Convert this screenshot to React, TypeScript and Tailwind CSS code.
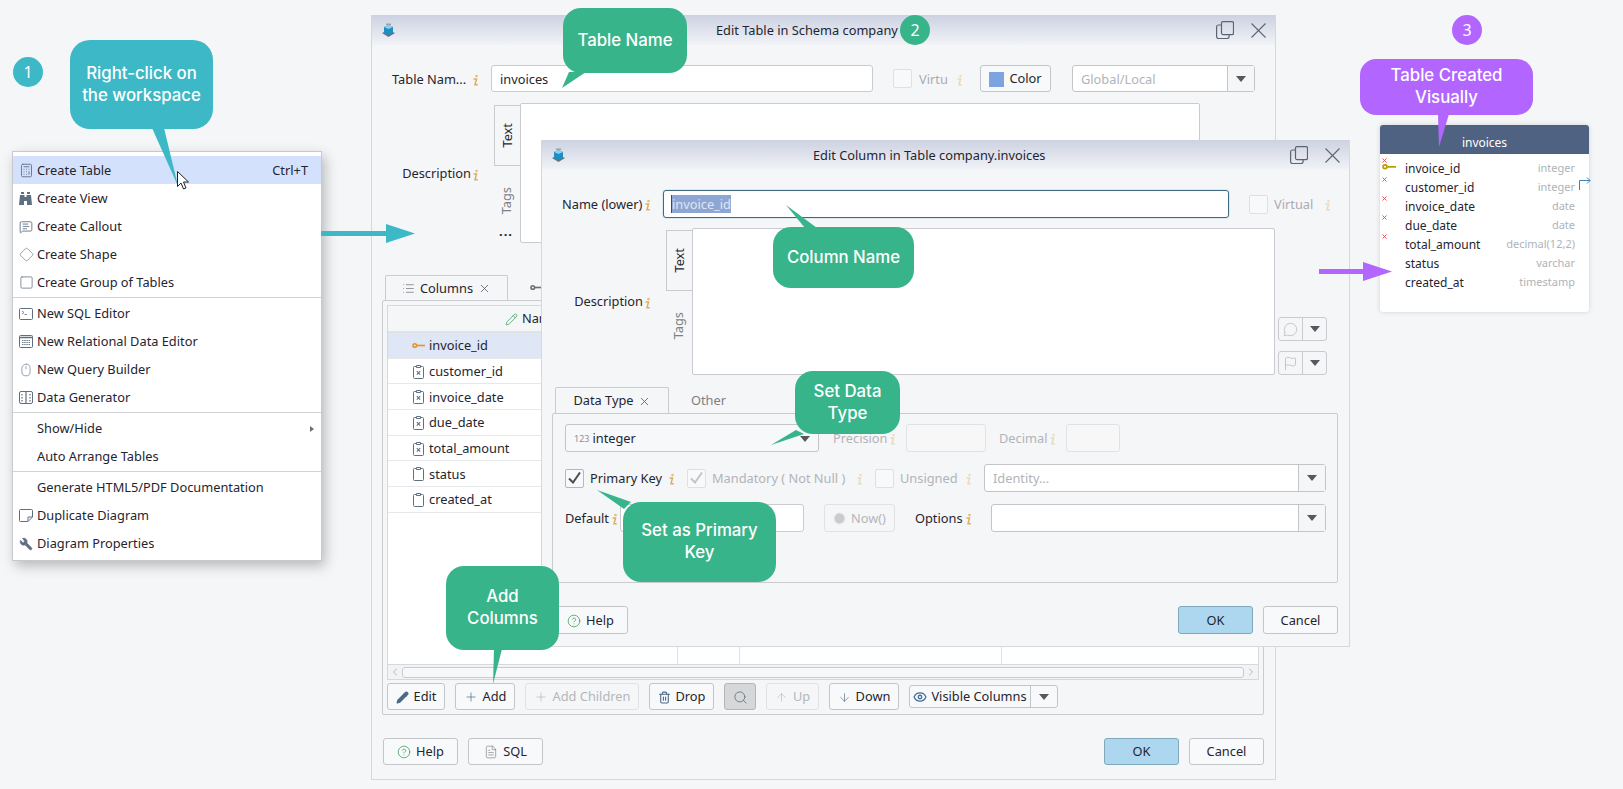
import type { ReactNode } from 'react';
import {
  ArrowDown, ArrowUp, Calculator, ChevronLeft, ChevronRight, CircleHelp, Clock, Diamond, Eye, FileText, Flag, List, MessageCircle,
  MessageSquareText, Mouse, Pencil, Plus, Search, Square, Trash2, Wrench, X,
} from 'lucide-react';

const ICON = '#5f6f82';

function Binoculars() {
  return (
    <svg width="13" height="13" viewBox="0 0 13 13" fill={ICON}>
      <path d="M2 0h3v2H2zM8 0h3v2H8zM1 3h4.500v2h2V3H12l1 10H8V9H5v4H0z" />
    </svg>
  );
}

function SqlIcon() {
  return (
    <svg width="14" height="12" viewBox="0 0 14 12" fill="none" stroke={ICON}>
      <rect x="0.500" y="0.500" width="13" height="11" rx="1" />
      <path d="M3 3l2 1.500-2 1.500M5.500 6.500h2.500" strokeWidth="0.800" />
    </svg>
  );
}

function GridIcon() {
  return (
    <svg width="14" height="13" viewBox="0 0 14 13" fill="none" stroke={ICON}>
      <rect x="0.500" y="0.500" width="13" height="12" rx="1" />
      <path d="M0.500 2.500h13" strokeWidth="1.500" />
      <path d="M3 5.500h8M3 7.500h8M3 9.500h8" strokeDasharray="1.500 0.700" strokeWidth="0.900" />
    </svg>
  );
}

function GeneratorIcon() {
  return (
    <svg width="14" height="13" viewBox="0 0 14 13" fill="none" stroke={ICON}>
      <rect x="0.500" y="0.500" width="13" height="12" rx="1.500" />
      <path d="M3 3v1.500M3 6v1.500M3 9v1.500M11 3v1.500M11 6v1.500M11 9v1.500M7 1v11" strokeWidth="1.200" />
    </svg>
  );
}

function NoteIcon() {
  return (
    <svg width="14" height="13" viewBox="0 0 14 13" fill="none" stroke={ICON}>
      <path d="M1.500 0.500h11a1 1 0 0 1 1 1v6.500l-4.500 4.500h-7.500a1 1 0 0 1-1-1v-10a1 1 0 0 1 1-1z" />
      <path d="M13 8h-4v4" />
    </svg>
  );
}

function KeyIcon({ color, size = 13 }: { color: string; size?: number }) {
  return (
    <svg width={size} height={(size * 7) / 13} viewBox="0 0 13 7" fill="none" stroke={color} strokeWidth="1.600">
      <circle cx="2.800" cy="3.500" r="1.800" />
      <path d="M5 3.500h8" />
    </svg>
  );
}

function ClipIcon({ crossed }: { crossed?: boolean }) {
  return (
    <svg width="11" height="14" viewBox="0 0 11 14" fill="none" stroke="#5f6f82" strokeWidth="1">
      <rect x="0.500" y="1.500" width="10" height="12" rx="1" />
      <path d="M3.500 0.500h4v2h-4z" fill="#fff" />
      {crossed && <path d="M3.800 6.200l3.400 3.400M7.200 6.200L3.800 9.600" strokeWidth="1.100" />}
    </svg>
  );
}

function Info({ muted }: { muted?: boolean }) {
  return (
    <svg width="8" height="14" viewBox="0 0 8 14" className={`shrink-0 ${muted ? 'opacity-40' : ''}`}>
      <circle cx="5.500" cy="4" r="1.300" fill="#e5bd74" />
      <path d="M2.500 7h3L4 12.700h2.800" fill="none" stroke="#dfae5a" strokeWidth="1.500" />
    </svg>
  );
}

function Caret() {
  return (
    <svg width="10" height="6" viewBox="0 0 10 6" fill="#55585c">
      <path d="M0 0h10L5 6z" />
    </svg>
  );
}

function Cube() {
  return (
    <svg width="15" height="15" viewBox="0 0 15 15" className="shrink-0">
      <path d="M1 10l6.500 4 6.500-4-6.500-3z" fill="#6b7078" />
      <path d="M3 4l4.500-2 4.500 2v6l-4.500 2-4.500-2z" fill="#1d8fc4" />
      <path d="M3 4l4.500 2 4.500-2-4.500-2z" fill="#8fd0ea" />
      <path d="M5 0.500h5v1.500h-5z" fill="#9aa0a8" />
    </svg>
  );
}

function TitleBar({ title, titleClass }: { title: string; titleClass: string }) {
  return (
    <div className="relative flex h-[30px] items-center bg-gradient-to-b from-[#cdd2e2] to-[#f1f3f7] pl-[9px]">
      <Cube />
      <span className={`absolute whitespace-nowrap text-[12.8px] text-[#1f2530] ${titleClass}`}>{title}</span>
      <div className="ml-auto flex items-center gap-[17px] pr-[9px]">
        <svg width="18" height="18" viewBox="0 0 18 18" fill="none" stroke="#5c6470" strokeWidth="1.200">
          <rect x="5.500" y="0.600" width="12" height="13" rx="1.500" />
          <path d="M5 4H2.600a2 2 0 0 0-2 2v9.500a2 2 0 0 0 2 2h8.500a2 2 0 0 0 2-2V14" />
        </svg>
        <svg width="15" height="15" viewBox="0 0 15 15" stroke="#5c6470" strokeWidth="1.100">
          <path d="M0.500 0.500l14 14M14.500 0.500l-14 14" />
        </svg>
      </div>
    </div>
  );
}

function Btn({ children, w, off, active, className = '' }: { children: ReactNode; w: string; off?: boolean; active?: boolean; className?: string }) {
  return (
    <div
      className={`flex h-[27px] shrink-0 items-center justify-center gap-[5px] rounded-[3px] border pt-[1px] text-[12.8px] ${w} ${
        off ? 'border-[#e1e2e4] text-[#b4b7bb]' : active ? 'border-[#b4b6b9] bg-[#d5d7d9] text-[#5c6470]' : 'border-[#c3c5c8] bg-[#f8f9fa] text-[#1f2530]'
      } ${className}`}
    >
      {children}
    </div>
  );
}

function Combo({ w, h = 'h-[27px]', text, box = 'w-[27px]' }: { w: string; h?: string; text?: string; box?: string }) {
  return (
    <div className={`flex shrink-0 items-stretch rounded-[3px] border border-[#c3c5c8] bg-white ${w} ${h}`}>
      <div className="flex-1 pl-[8px] text-[12.8px] leading-[26px] text-[#b1b4b8]">{text}</div>
      <div className={`flex items-center justify-center border-l border-[#c3c5c8] bg-[#f5f6f8] ${box}`}>
        <Caret />
      </div>
    </div>
  );
}

function Check({ on, off }: { on?: boolean; off?: boolean }) {
  return (
    <div className={`flex h-[19px] w-[19px] shrink-0 items-center justify-center rounded-[2px] border ${off ? 'border-[#dfe0e2]' : 'border-[#b5b7ba]'} bg-[#f8f9fa]`}>
      {on && (
        <svg width="13" height="12" viewBox="0 0 13 12" fill="none" stroke={off ? '#c3c5c8' : '#4a4d52'} strokeWidth="2">
          <path d="M1 6.500l4 4 7-10" />
        </svg>
      )}
    </div>
  );
}

function SideTabs() {
  return (
    <div className="flex w-[26px] shrink-0 flex-col items-center pt-[2px]">
      <div className="flex h-[61px] w-[26px] items-center justify-center border border-r-0 border-[#c9cbce] text-[12.8px] text-[#1f2530]">
        <span className="rotate-180 [writing-mode:vertical-rl]">Text</span>
      </div>
      <span className="mt-[21px] rotate-180 text-[12.8px] text-[#7d8085] [writing-mode:vertical-rl]">Tags</span>
    </div>
  );
}

type MenuEntry = { label: string; icon?: ReactNode; hint?: string; sep?: boolean; hot?: boolean; sub?: boolean };

const menu: MenuEntry[] = [
  { label: 'Create Table', icon: <Calculator size={15} color={ICON} strokeWidth={1.4} />, hint: 'Ctrl+T', hot: true },
  { label: 'Create View', icon: <Binoculars /> },
  { label: 'Create Callout', icon: <MessageSquareText size={14} color={ICON} strokeWidth={1.5} /> },
  { label: 'Create Shape', icon: <Diamond size={15} color={ICON} strokeWidth={1} /> },
  { label: 'Create Group of Tables', icon: <Square size={15} color={ICON} strokeWidth={1.2} />, sep: true },
  { label: 'New SQL Editor', icon: <SqlIcon /> },
  { label: 'New Relational Data Editor', icon: <GridIcon /> },
  { label: 'New Query Builder', icon: <Mouse size={14} color={ICON} strokeWidth={1.1} /> },
  { label: 'Data Generator', icon: <GeneratorIcon />, sep: true },
  { label: 'Show/Hide', sub: true },
  { label: 'Auto Arrange Tables', sep: true },
  { label: 'Generate HTML5/PDF Documentation' },
  { label: 'Duplicate Diagram', icon: <NoteIcon /> },
  { label: 'Diagram Properties', icon: <Wrench size={14} color={ICON} fill={ICON} strokeWidth={1.2} className="-scale-x-100" /> },
];

const columns = [
  { name: 'invoice_id', type: 'integer', key: true, nn: true },
  { name: 'customer_id', type: 'integer', nn: true },
  { name: 'invoice_date', type: 'date', nn: true },
  { name: 'due_date', type: 'date', nn: true },
  { name: 'total_amount', type: 'decimal(12,2)', nn: true },
  { name: 'status', type: 'varchar' },
  { name: 'created_at', type: 'timestamp' },
];

function Callout({ box, tail, points, children }: { box: string; tail: string; points: string; children: ReactNode }) {
  return (
    <>
      <svg className={`absolute z-30 ${tail}`} fill="currentColor">
        <polygon points={points} />
      </svg>
      <div className={`absolute z-30 flex items-center justify-center pb-[2px] text-center font-['Inter',sans-serif] text-[16.8px] font-medium leading-[22px] text-white ${box}`}>
        <div>{children}</div>
      </div>
    </>
  );
}

function Badge({ n, className }: { n: number; className: string }) {
  return (
    <div className={`absolute z-30 flex h-[30px] w-[30px] items-center justify-center rounded-full text-[16px] text-white ${className}`}>{n}</div>
  );
}

function Arrow({ className, color, shaft }: { className: string; color: string; shaft: number }) {
  return (
    <svg className={`absolute z-20 ${className}`} fill={color}>
      <path d={`M0 7h${shaft}v-7l29 9.500-29 9.500v-7h-${shaft}z`} />
    </svg>
  );
}

export default function App() {
  return (
    <div className="relative h-[789px] w-[1623px] overflow-hidden whitespace-nowrap bg-[#f5f6f8] font-['Noto_Sans',sans-serif] text-[#1f2530]">
      <Badge n={1} className="left-[13px] top-[57px] bg-[#3db8c6]" />
      <Badge n={2} className="left-[900px] top-[15px] bg-[#38b48a]" />
      <Badge n={3} className="left-[1452px] top-[15px] bg-[#b266ff]" />

      {/* Context menu */}
      <div className="absolute left-[12px] top-[151px] z-10 w-[310px] border border-[#c8c9cb] bg-white pb-[3px] pt-[4px] shadow-[3px_5px_12px_rgba(0,0,0,0.25)]">
        {menu.map(m => (
          <div key={m.label}>
            <div className={`flex h-[28px] items-center pl-[6px] pr-[13px] pt-[1px] text-[12.8px] ${m.hot ? 'bg-[#d3e1fc]' : ''}`}>
              <span className="flex w-[18px] shrink-0 items-center">{m.icon}</span>
              <span>{m.label}</span>
              {m.hint && <span className="ml-auto">{m.hint}</span>}
              {m.sub && <span className="ml-auto mr-[-6px] h-0 w-0 border-y-[3.500px] border-l-[4px] border-y-transparent border-l-[#6b6e73]" />}
            </div>
            {m.sep && (
              <div className="flex h-[3px] items-center">
                <div className="h-px w-full bg-[#d2d3d5]" />
              </div>
            )}
          </div>
        ))}
      </div>

      <Arrow className="left-[321px] top-[224px] h-[20px] w-[94px]" color="#3db8c6" shaft={65} />

      {/* Edit Table dialog */}
      <div className="absolute left-[371px] top-[15px] flex h-[765px] w-[905px] flex-col border border-t-0 border-[#d6d8db] bg-[#f5f6f8]">
        <TitleBar title="Edit Table in Schema company" titleClass="left-[344px] top-[6px]" />
        <div className="mt-[20px] flex h-[27px] items-center text-[12.8px] [&>span]:pt-[2px]">
          <span className="ml-[20px] w-[79px] shrink-0">Table Nam...</span>
          <div className="w-[20px]"><Info /></div>
          <div className="h-[27px] w-[382px] rounded-[3px] border border-[#c9cbce] bg-white pl-[8px] leading-[26px]">invoices</div>
          <div className="ml-[20px]"><Check off /></div>
          <span className="ml-[7px] w-[30px] text-[#a9acb0]">Virtu</span>
          <div className="ml-[6px]"><Info muted /></div>
          <Btn w="w-[71px]" className="ml-[17px]">
            <span className="h-[15px] w-[15px] bg-[#7ea4e0]" /> Color
          </Btn>
          <Combo w="w-[183px] ml-[21px]" text="Global/Local" />
        </div>
        <div className="mt-[11px] flex h-[140px]">
          <div className="flex w-[122px] shrink-0 items-center justify-end pr-[15px] text-[12.8px]">
            <div className="mt-[2px] flex items-center">
              Description
              <Info />
            </div>
          </div>
          <div className="relative">
            <SideTabs />
            <span className="absolute left-[5px] top-[122px] text-[13px] font-bold leading-none tracking-[1px]">...</span>
          </div>
          <div className="w-[680px] rounded-[2px] border border-[#c9cbce] bg-white" />
        </div>
        <div className="ml-[13px] mt-[32px] flex h-[25px] text-[12.8px]">
          <div className="flex w-[123px] items-center justify-center gap-[5px] rounded-t-[2px] border border-b-0 border-[#c9cbce] pt-[1px]">
            <List size={13} color="#5c6470" strokeWidth={1.2} /> Columns <X size={13} color="#5c6470" strokeWidth={1.6} />
          </div>
          <div className="ml-[22px] flex items-center">
            <KeyIcon color="#6b6e73" />
          </div>
        </div>
        <div className="ml-[10px] flex h-[415px] w-[882px] flex-col rounded-[2px] border border-[#c9cbce] px-[4px] pt-[4px]">
          <div className="flex h-[375px] flex-col border border-[#d6d8db] bg-white">
            <div className="flex h-[27px] items-center justify-center border-b-2 border-[#e0e2e5] bg-[#f5f6f8] pr-[583px] pt-[1px] text-[12.8px]">
              <Pencil size={13} color="#3f9a5a" strokeWidth={1.4} className="mr-[4px]" /> Name
            </div>
            {columns.map((c, i) => (
              <div key={c.name} className={`flex h-[25.7px] shrink-0 items-center border-b border-[#e6e8ea] pl-[22px] pt-[1px] text-[12.8px] ${i === 0 ? 'bg-[#dfe6f5]' : ''}`}>
                <span className="flex w-[17px] justify-center">{c.key ? <KeyIcon color="#e8951e" /> : <ClipIcon crossed={c.nn} />}</span>
                <span className="ml-[2px]">{c.name}</span>
              </div>
            ))}
            <div className="flex flex-1">
              <div className="w-[290px] border-r border-[#e0e2e5]" />
              <div className="w-[62px] border-r border-[#e0e2e5]" />
              <div className="w-[262px] border-r border-[#e0e2e5]" />
            </div>
            <div className="flex h-[15px] shrink-0 items-center border-t border-[#d6d8db] bg-[#f2f3f5] px-[1px] text-[#8d9095]">
              <ChevronLeft size={12} strokeWidth={1.2} />
              <div className="mx-[1px] h-[11px] flex-1 rounded-[3px] border border-[#c9cbce] bg-[#f7f8f9]" />
              <ChevronRight size={12} strokeWidth={1.2} />
            </div>
          </div>
          <div className="mt-[3px] flex gap-[10px]">
            <Btn w="w-[58px]"><Pencil size={13} color="#4a6a8a" fill="#4a6a8a" /> Edit</Btn>
            <Btn w="w-[60px]"><Plus size={14} color="#4a6a8a" strokeWidth={1.2} /> Add</Btn>
            <Btn w="w-[114px]" off><Plus size={14} strokeWidth={1.2} /> Add Children</Btn>
            <Btn w="w-[65px]"><Trash2 size={13} color="#4a6a8a" /> Drop</Btn>
            <Btn w="w-[32px]" active><Search size={15} strokeWidth={1.2} /></Btn>
            <Btn w="w-[53px]" off><ArrowUp size={13} strokeWidth={1.2} /> Up</Btn>
            <Btn w="w-[70px]"><ArrowDown size={13} color="#4a6a8a" strokeWidth={1.2} /> Down</Btn>
            <div className="mt-[2px] flex h-[23px] w-[149px] items-center rounded-[3px] border border-[#c3c5c8] bg-[#f8f9fa] text-[12.8px]">
              <span className="flex h-full flex-1 items-center justify-center gap-[4px] border-r border-[#c3c5c8]">
                <Eye size={14} color="#3f6e9a" strokeWidth={2.2} /> Visible Columns
              </span>
              <span className="flex w-[26px] justify-center"><Caret /></span>
            </div>
          </div>
        </div>
        <div className="mt-[23px] flex pl-[11px] pr-[11px]">
          <Btn w="w-[75px]"><CircleHelp size={14} color="#3f9a5a" strokeWidth={1.3} /> Help</Btn>
          <Btn w="w-[75px]" className="ml-[10px]"><FileText size={14} color="#6b6e73" strokeWidth={1} /> SQL</Btn>
          <Btn w="w-[75px]" className="ml-auto !border-[#7fa8bb] !bg-[#acd7ee]">OK</Btn>
          <Btn w="w-[75px]" className="ml-[10px]">Cancel</Btn>
        </div>
      </div>

      {/* Edit Column dialog */}
      <div className="absolute left-[541px] top-[140px] z-10 flex h-[507px] w-[809px] flex-col border border-t-0 border-[#d6d8db] bg-[#f5f6f8]">
        <TitleBar title="Edit Column in Table company.invoices" titleClass="left-[271px] top-[6px]" />
        <div className="mt-[20px] flex h-[28px] items-center text-[12.8px] [&>span]:pt-[2px]">
          <span className="ml-[20px] w-[81px] shrink-0">Name (lower)</span>
          <div className="w-[20px]"><Info /></div>
          <div className="flex h-[28px] w-[566px] items-center rounded-[3px] border border-[#3e6a80] bg-white pl-[7px] shadow-[0_0_0_1px_#dcebf2]">
            <span className="flex h-[18px] items-center border-l border-[#3e4a60] bg-[#8ea6d3] pt-[1px] text-[#dfe6f3]">invoice_id</span>
          </div>
          <div className="ml-[20px]"><Check off /></div>
          <span className="ml-[6px] w-[40px] text-[#a9acb0]">Virtual</span>
          <div className="ml-[9px]"><Info muted /></div>
        </div>
        <div className="mt-[10px] flex h-[147px]">
          <div className="flex w-[124px] shrink-0 items-center justify-end pr-[15px] text-[12.8px]">
            <div className="flex items-center pt-[1px]">
              Description
              <Info />
            </div>
          </div>
          <SideTabs />
          <div className="w-[583px] rounded-[2px] border border-[#c9cbce] bg-white" />
          <div className="ml-[3px] flex flex-col justify-end gap-[10px]">
            {[MessageCircle, Flag].map((I, n) => (
              <div key={n} className="flex h-[24px] w-[49px] rounded-[3px] border border-[#c9cbce] bg-[#f5f6f8]">
                <span className="flex w-[24px] items-center justify-center border-r border-[#c9cbce]"><I size={15} color="#a9acb0" strokeWidth={1} /></span>
                <span className="flex flex-1 items-center justify-center"><Caret /></span>
              </div>
            ))}
          </div>
        </div>
        <div className="ml-[13px] mt-[12px] flex h-[26px] text-[12.8px]">
          <div className="flex w-[114px] items-center justify-center gap-[4px] rounded-t-[2px] border border-b-0 border-[#c9cbce] pt-[1px]">
            Data Type <X size={13} color="#5c6470" strokeWidth={1.6} />
          </div>
          <span className="ml-[22px] self-center pt-[1px] text-[#7d8085]">Other</span>
        </div>
        <div className="ml-[10px] flex h-[170px] w-[786px] flex-col rounded-[2px] border border-[#c9cbce] pl-[12px] text-[12.8px]">
          <div className="mt-[10px] flex h-[28px] items-center [&>span]:pt-[2px]">
            <div className="flex h-[28px] w-[254px] items-center rounded-[3px] border border-[#c3c5c8] bg-[#f7f8f9] pl-[8px] pt-[1px]">
              <span className="text-[9px] text-[#8d9095]">123</span>
              <span className="ml-[3px]">integer</span>
              <span className="ml-auto mr-[8px]"><Caret /></span>
            </div>
            <span className="ml-[14px] w-[53px] text-[#b1b4b8]">Precision</span>
            <div className="ml-[2px]"><Info muted /></div>
            <div className="ml-[10px] h-[28px] w-[80px] rounded-[3px] border border-[#e1e2e4] bg-[#f7f7f7]" />
            <span className="ml-[13px] w-[47px] text-[#b1b4b8]">Decimal</span>
            <div className="ml-[2px]"><Info muted /></div>
            <div className="ml-[10px] h-[28px] w-[54px] rounded-[3px] border border-[#e1e2e4] bg-[#f7f7f7]" />
          </div>
          <div className="mt-[12px] flex h-[28px] items-center [&>span]:pt-[2px]">
            <Check on />
            <span className="ml-[6px] w-[72px]">Primary Key</span>
            <div className="ml-[5px]"><Info /></div>
            <div className="ml-[12px]"><Check on off /></div>
            <span className="ml-[6px] w-[136px] text-[#b1b4b8]">Mandatory ( Not Null )</span>
            <div className="ml-[7px]"><Info muted /></div>
            <div className="ml-[12px]"><Check off /></div>
            <span className="ml-[6px] w-[58px] text-[#b1b4b8]">Unsigned</span>
            <div className="ml-[6px]"><Info muted /></div>
            <Combo w="w-[342px] ml-[12px]" h="h-[28px]" text="Identity..." />
          </div>
          <div className="mt-[12px] flex h-[28px] items-center [&>span]:pt-[2px]">
            <span className="w-[44px]">Default</span>
            <div className="ml-[1px]"><Info /></div>
            <div className="ml-[2px] h-[28px] w-[184px] rounded-[3px] border border-[#c9cbce] bg-white" />
            <Btn w="w-[71px] !h-[28px]" off className="ml-[20px]"><Clock size={13} fill="#c9cbce" color="#e6e7e9" /> Now()</Btn>
            <span className="ml-[20px] w-[48px]">Options</span>
            <div className="ml-[1px]"><Info /></div>
            <Combo w="w-[335px] ml-[19px]" h="h-[28px]" />
          </div>
        </div>
        <div className="mt-[23px] flex px-[11px]">
          <Btn w="w-[75px] !h-[28px]"><CircleHelp size={14} color="#3f9a5a" strokeWidth={1.3} /> Help</Btn>
          <Btn w="w-[75px] !h-[28px]" className="ml-auto !border-[#7fa8bb] !bg-[#acd7ee]">OK</Btn>
          <Btn w="w-[75px] !h-[28px]" className="ml-[10px]">Cancel</Btn>
        </div>
      </div>

      <Arrow className="left-[1319px] top-[262px] z-20 h-[20px] w-[74px]" color="#b266ff" shaft={44} />

      {/* Visual table */}
      <div className="absolute left-[1380px] top-[125px] h-[187px] w-[209px] overflow-hidden rounded-[3px] bg-white text-[12px] shadow-[0_0_5px_rgba(0,0,0,0.15)]">
        <div className="flex h-[29px] items-center justify-center bg-[#4f6282] pt-[6px] text-white">invoices</div>
        <div className="pt-[5px]">
          {columns.map(c => (
            <div key={c.name} className="relative flex h-[19px] items-center pl-[25px] pr-[14px]">
              {c.nn && (
                <svg width="5" height="5" viewBox="0 0 5 5" className="absolute left-[2px] top-[-1px]" stroke="#e0453f" strokeWidth="0.900">
                  <path d="M0.500 0.500l4 4M4.500 0.500l-4 4" />
                </svg>
              )}
              {c.key && <span className="absolute left-[2px] top-[4px]"><KeyIcon color="#b8a000" size={14} /></span>}
              <span>{c.name}</span>
              <span className="ml-auto text-[11px] text-[#aeb3bb]">{c.type}</span>
            </div>
          ))}
        </div>
      </div>
      <svg className="absolute left-[1578px] top-[177px] h-[13px] w-[13px]" fill="none" stroke="#3f7fb5" strokeWidth="1">
        <path d="M1.500 13V3.500H12M9 0.500l3 3-3 3" />
      </svg>

      {/* Callouts */}
      <Callout box="left-[70px] top-[40px] h-[89px] w-[143px] rounded-[20px] bg-[#3db8c6]" tail="left-[150px] top-[128px] h-[60px] w-[30px] text-[#3db8c6]" points="2,0 14,0 28,58">
        Right-click on
        <br />
        the workspace
      </Callout>
      <Callout box="left-[563px] top-[8px] h-[65px] w-[124px] rounded-[18px] bg-[#38b48a]" tail="left-[560px] top-[72px] h-[18px] w-[30px] text-[#38b48a]" points="9,0 26,0 2,16">
        Table Name
      </Callout>
      <Callout box="left-[773px] top-[227px] h-[61px] w-[141px] rounded-[18px] bg-[#38b48a]" tail="left-[785px] top-[204px] h-[25px] w-[34px] text-[#38b48a]" points="1,1 20,24 32,24">
        Column Name
      </Callout>
      <Callout box="left-[795px] top-[371px] h-[63px] w-[105px] rounded-[18px] bg-[#38b48a]" tail="left-[770px] top-[428px] h-[18px] w-[36px] text-[#38b48a]" points="1,17 26,2 34,6">
        Set Data
        <br />
        Type
      </Callout>
      <Callout box="left-[623px] top-[502px] h-[80px] w-[153px] rounded-[18px] bg-[#38b48a]" tail="left-[596px] top-[489px] h-[22px] w-[38px] text-[#38b48a]" points="1,1 35,13 28,20">
        Set as Primary
        <br />
        Key
      </Callout>
      <Callout box="left-[446px] top-[566px] h-[84px] w-[113px] rounded-[18px] bg-[#38b48a]" tail="left-[492px] top-[649px] h-[36px] w-[12px] text-[#38b48a]" points="2,0 10,0 1,35">
        Add
        <br />
        Columns
      </Callout>
      <Callout box="left-[1360px] top-[59px] h-[56px] w-[173px] rounded-[16px] bg-[#b266ff]" tail="left-[1435px] top-[114px] h-[34px] w-[16px] text-[#b266ff]" points="3,0 14,0 4,33">
        Table Created
        <br />
        Visually
      </Callout>

      {/* Pointer */}
      <svg className="absolute left-[177px] top-[171px] z-40 h-[20px] w-[13px]" viewBox="0 0 13 20" fill="#fff" stroke="#222" strokeWidth="1">
        <path d="M0.500 0.500v15l3.500-3.500 2.500 6 2.500-1-2.500-6h5z" />
      </svg>
    </div>
  );
}
